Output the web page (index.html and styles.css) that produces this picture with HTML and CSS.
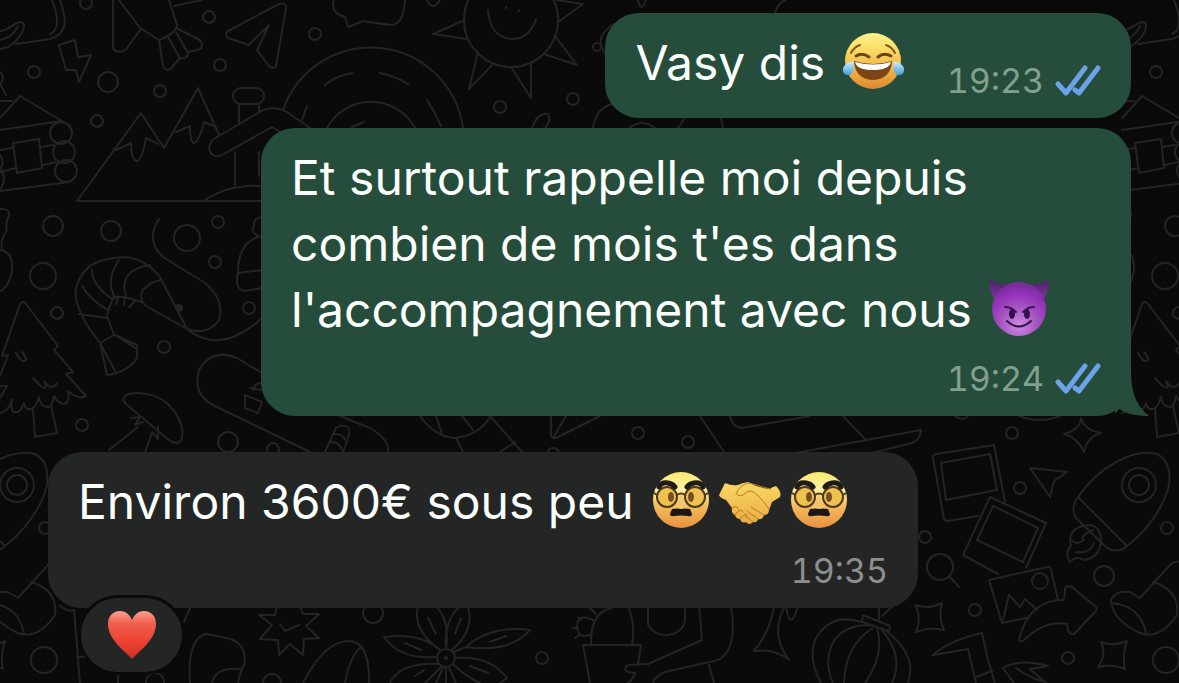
FILE: index.html
```html
<!DOCTYPE html>
<html lang="fr">
<head>
<meta charset="utf-8">
<meta name="viewport" content="width=device-width, initial-scale=1">
<title>Discussion</title>
<link rel="stylesheet" href="styles.css">
</head>
<body>
<svg class="defs" width="0" height="0" aria-hidden="true">
  <defs>
    <linearGradient id="gold" x1="0" y1="0" x2="0" y2="1">
      <stop offset="0" stop-color="#fff08a"/><stop offset=".25" stop-color="#fbe16a"/><stop offset=".6" stop-color="#f3b94b"/><stop offset="1" stop-color="#dd8a2e"/>
    </linearGradient>
    <linearGradient id="peach" x1="0" y1="0" x2="0" y2="1">
      <stop offset="0" stop-color="#fbe670"/><stop offset=".3" stop-color="#fdf3a0"/><stop offset=".6" stop-color="#f4bd5c"/><stop offset="1" stop-color="#e9903f"/>
    </linearGradient>
    <radialGradient id="violet" cx=".5" cy=".8" r=".75">
      <stop offset="0" stop-color="#cf8ae0"/><stop offset=".45" stop-color="#a555c0"/><stop offset=".8" stop-color="#9330b8"/><stop offset="1" stop-color="#75309a"/>
    </radialGradient>
    <linearGradient id="horn" x1="0" y1="0" x2="0" y2="1">
      <stop offset="0" stop-color="#4a2266"/><stop offset="1" stop-color="#8336a6"/>
    </linearGradient>
    <linearGradient id="tear" x1="0" y1="0" x2="0" y2="1">
      <stop offset="0" stop-color="#d3f1fb"/><stop offset="1" stop-color="#3f9fda"/>
    </linearGradient>
    <linearGradient id="hand" x1="0" y1="0" x2="0" y2="1">
      <stop offset="0" stop-color="#fbd866"/><stop offset="1" stop-color="#e9ac42"/>
    </linearGradient>
    <linearGradient id="red" x1="0" y1="0" x2="0" y2="1">
      <stop offset="0" stop-color="#f9a191"/><stop offset=".25" stop-color="#f0604f"/><stop offset=".65" stop-color="#ee4132"/><stop offset="1" stop-color="#cf3022"/>
    </linearGradient>
    <symbol id="ticks" viewBox="0 0 46 32">
      <path d="M3 19 11 28 30 3M20 25 24 28 43 3" fill="none" stroke="#6ba3e8" stroke-width="5" stroke-linecap="round" stroke-linejoin="round"/>
    </symbol>
    <symbol id="disguise" viewBox="0 0 65 65">
      <circle cx="32" cy="32" r="28" fill="url(#peach)"/>
      <circle cx="18" cy="29" r="10" fill="#efc250" stroke="#4c3920" stroke-width="2"/>
      <circle cx="46" cy="29" r="10" fill="#efc250" stroke="#4c3920" stroke-width="2"/>
      <path d="M10 19Q12 14 19 15Q24 16 26 19M54 19Q52 14 45 15Q40 16 38 19" fill="none" stroke="#211b18" stroke-width="5" stroke-linecap="round" stroke-linejoin="round"/>
      <path d="M32 27Q27 36 26 41H38Q37 36 32 27Z" fill="#f2c66c"/>
      <path d="M28 27Q32 24 36 27M8 27 5 25M56 27 59 25" fill="none" stroke="#4c3920" stroke-width="2"/>
      <ellipse cx="22" cy="29" rx="3" ry="5" fill="#765022"/>
      <ellipse cx="42" cy="29" rx="3" ry="5" fill="#765022"/>
      <path d="M23 41Q29 40 32 41Q36 40 41 41L43 46Q43 49 39 48Q32 47 25 48Q21 49 21 46Z" fill="#1c1715"/>
    </symbol>
    <g id="doodles">
      <g>
        <circle cx="86" cy="3" r="6"/><circle cx="34" cy="72" r="6"/><circle cx="108" cy="82" r="10"/><circle cx="160" cy="91" r="6"/><circle cx="97" cy="121" r="6"/><circle cx="209" cy="17" r="6"/><circle cx="220" cy="65" r="6"/><circle cx="315" cy="34" r="6"/><circle cx="500" cy="107" r="6"/><circle cx="573" cy="99" r="6"/><circle cx="597" cy="47" r="4"/>
        <circle cx="53" cy="226" r="10"/><circle cx="111" cy="231" r="10"/><circle cx="43" cy="276" r="13"/><circle cx="187" cy="238" r="13"/><circle cx="218" cy="222" r="6"/><circle cx="215" cy="262" r="6"/><circle cx="57" cy="313" r="6"/><circle cx="249" cy="308" r="6"/><circle cx="164" cy="347" r="6"/><circle cx="82" cy="425" r="6"/><circle cx="228" cy="442" r="10"/><circle cx="273" cy="449" r="6"/>
        <circle cx="638" cy="433" r="6"/><circle cx="688" cy="442" r="6"/><circle cx="553" cy="454" r="6"/><circle cx="1012" cy="433" r="6"/><circle cx="1020" cy="488" r="6"/><circle cx="925" cy="537" r="6"/><circle cx="975" cy="610" r="6"/><circle cx="1167" cy="528" r="6"/><circle cx="1104" cy="576" r="10"/><circle cx="1068" cy="658" r="6"/><circle cx="1166" cy="660" r="13"/><circle cx="940" cy="567" r="13"/><circle cx="373" cy="613" r="10"/><circle cx="272" cy="683" r="9"/><circle cx="542" cy="658" r="6"/><circle cx="155" cy="682" r="9"/>
      </g>
      <path d="M52 0C58 15 60 30 50 34M60 0C67 20 68 34 50 39L16 44M0 31C10 30 14 22 21 22C28 24 22 38 8 47L0 49M18 26C13 36 8 38 0 40"/>
      <path d="M59 45 75 40 78 57 91 55 79 82 76 70 66 70Z"/>
      <path d="M113 0V47C114 53 124 53 127 48L140 30M119 0 140 28 159 40C170 36 177 30 177 25L169 0M159 40 163 66C165 72 171 70 173 66L180 58M168 37 180 58Q187 60 188 53L176 32M178 29 200 40Q205 48 197 50L188 52M174 6 201 0"/>
      <path d="M228 31 279 4Q286 2 286 8L276 66Q273 70 269 66L257 50 269 25 249 45 228 38Q224 34 228 31"/>
      <path d="M334 0C330 10 338 15 345 17L348 27 363 21Q380 24 393 25Q404 22 405 0M427 0Q433 12 440 0M638 0Q641 14 646 0M775 13Q778 2 786 0"/>
      <path d="M262 201H77L141 113 164 148 198 88 219 135M116 150 131 143Q131 160 137 161Q142 160 146 138L158 144M176 132 190 126Q190 143 194 143Q200 140 204 122L216 127"/>
      <rect x="233" y="88" width="31" height="16" rx="8"/>
      <path d="M239 104V124M259 104V111M310 128 287 112Q272 104 258 113L212 140Q206 150 213 155Q218 158 224 154L272 127 282 133M235 152V185M205 200Q230 184 261 186M259 152V176"/>
      <path d="M283 110A93 93 0 0 1 463 128M327 128A50 50 0 0 1 415 128M325 85Q335 76 352 73M380 73Q395 76 408 84M427 100Q435 112 441 126M302 120 307 106M352 127 364 122"/>
      <path d="M0 118 20 96 62 121 0 130M13 143 39 139 42 168 17 173ZM0 150 12 148M0 172 16 168M40 147 53 145M43 165 56 162M0 191 70 182M0 155Q5 162 0 169Q8 178 0 190M0 72Q6 78 0 84L6 95M0 101H12"/>
      <circle cx="61" cy="133" r="11"/><circle cx="64" cy="152" r="11"/><circle cx="66" cy="171" r="11"/>
      <circle cx="511" cy="20" r="47"/>
      <path d="M488 10Q490 38 513 39Q530 38 536 19M506 7V8M519 10V11M465 20 433 34 467 39M478 52 469 89 494 63M511 67 531 98 531 63M544 54 577 65 555 36M557 0 583 4 558 22"/>
      <path d="M532 128Q538 112 548 114Q552 120 545 128M593 128Q596 108 612 104M614 24Q592 38 606 54M629 128Q642 118 655 128M678 128 685 118M721 118 723 128"/>
      <path d="M0 209Q10 208 9 216Q5 222 7 230Q0 240 2 248M0 250Q14 252 12 272Q8 288 0 291"/>
      <path d="M0 376 8 355 2 356 20 304Q23 300 26 304L58 346 54 350 73 372 66 374 86 396Q78 400 68 391Q70 400 65 404Q58 404 54 396Q52 408 47 407Q40 406 39 397Q36 408 31 409Q25 410 24 403Q20 414 14 412Q10 410 12 400Q8 412 0 413M33 409 35 437 57 433 51 406M16 353Q22 364 26 360Q26 356 22 352M33 378Q45 392 46 386L44 381Q52 392 57 383M0 386H7L0 398"/>
      <path d="M100 343Q70 305 77 285C84 262 104 258 125 257C145 258 160 275 162 281L187 329 146 306Q138 298 143 290Q150 282 161 280M100 343 114 335 107 316Q110 304 114 297Q125 296 141 302M79 314 107 318M82 286Q90 300 108 310M92 270Q92 285 112 299M119 260Q105 280 115 298M150 265Q118 270 126 296M100 343 107 375Q128 372 137 358V345L115 335M100 343 115 371M115 335 137 349M116 304 118 298M124 305 125 297M129 307 135 301M159 219Q145 240 163 257L205 283Q225 300 219 320Q208 336 187 329Q220 356 262 318"/>
      <circle class="dot" cx="179" cy="308" r="3"/>
      <path d="M124 397C130 390 155 392 168 404Q185 422 182 438Q180 446 170 441L126 404Q122 400 124 397M131 418 140 417 135 425 143 422M109 450 138 427M145 452 152 432 158 439V426"/>
      <path d="M262 373 237 358Q212 348 199 370Q192 395 215 406L310 452M250 388 262 390M245 395 262 402 258 413 245 408ZM253 390Q256 380 264 385M262 236Q238 240 238 273L262 270M238 273Q234 290 245 291L262 288M262 217Q253 218 254 226Q250 232 258 236"/>
      <path d="M340 416 370 428Q390 440 388 452M325 452 336 428Q340 424 348 427Q352 430 343 452M335 434Q343 434 345 440M330 442Q340 442 342 450M420 416Q435 437 455 438Q478 436 491 416M436 416 442 434M462 416 473 430M456 438 463 452M490 416 522 452M500 452 515 442M600 416 558 437Q551 440 551 434V416M566 416 553 438M700 416 724 452M730 416Q733 428 742 428L810 416M843 416 865 439M790 454 921 430Q920 440 912 443L868 454"/>
      <path d="M950 577 959 587M1081 418Q1084 430 1101 433Q1087 437 1084 452Q1078 438 1064 434Q1080 430 1081 418M915 605Q928 610 942 603Q938 617 944 630Q930 626 916 632Q922 618 915 605M1101 642Q1114 647 1127 641Q1122 655 1125 669Q1112 663 1098 667Q1107 655 1101 642M1019 416Q1040 424 1060 416M955 416Q962 422 968 416"/>
      <path d="M1005 502 994 445 936 454Q932 455 933 458L944 519Q945 521 948 521L978 516M941 463 990 454 997 490 946 500ZM1026 568 1046 523 990 497 963 555 998 574M993 506 1038 528 1023 562 977 540Z"/>
      <path d="M1058 600 1051 570Q1050 566 1047 567L989 580 1002 623 1026 618M1003 620 1009 595 1020 607 1025 599 1037 610"/><circle cx="1040" cy="581" r="8"/>
      <path d="M1019 640C1025 612 1042 600 1063 600Q1065 598 1065 588Q1067 585 1072 587L1096 607Q1098 610 1094 613L1074 634Q1068 636 1067 624Q1045 620 1024 640Q1020 643 1019 640M1030 468 1067 472 1054 481 1050 497Z"/>
      <circle cx="1139" cy="485" r="17"/><circle cx="1139" cy="485" r="10"/>
      <path d="M1078 497C1100 465 1135 448 1157 454Q1172 462 1169 485Q1160 520 1127 546L1078 497Q1070 508 1076 518L1107 548Q1118 554 1127 546M1088 525Q1066 528 1071 546Q1064 552 1070 562Q1076 555 1084 560Q1100 558 1101 540Q1100 525 1088 525M1093 530Q1079 536 1084 540Q1076 546 1072 540M1076 552Q1090 554 1094 543"/>
      <path d="M1111 600Q1115 590 1130 592L1140 598 1170 565Q1175 560 1184 562M1153 582Q1180 590 1177 615Q1160 640 1140 633Q1112 620 1111 600M1111 603Q1140 605 1146 633M60 606Q68 612 74 610L80 683M77 657H85M118 683V674M184 622 190 608"/>
      <path d="M277 606 275 615 259 615 272 625 260 639 278 640 279 655 290 644 303 655 304 639 319 638 306 626 319 614 303 614 300 606M280 624 285 631 299 625M190 683Q187 640 205 634Q215 635 230 639Q248 645 244 665Q240 672 238 683M212 683Q215 667 240 669M303 683Q325 640 350 641Q370 643 369 683M345 683Q350 655 362 646"/>
      <circle cx="446" cy="658" r="9"/><circle cx="446" cy="658" r="1"/>
      <path d="M440 650Q412 630 418 606M446 648Q450 620 436 606M446 648Q444 620 460 606M452 650Q475 630 468 606M437 657Q400 660 384 637Q420 632 440 650M466 647Q490 625 530 630Q510 653 466 647L454 652M455 658Q490 655 507 678L500 683M453 664Q465 676 480 683M439 664Q400 662 390 683M441 667 425 683M446 667V683M443 668 436 683M449 668 456 683M428 618 436 634M461 618 455 634M405 643 421 650M490 642 506 636M470 666 488 673M415 676 424 670"/>
      <path d="M591 645Q590 612 612 608M628 606Q636 625 632 645M638 664 641 645H583L590 683M588 606 596 614M593 620Q578 612 577 627Q578 640 592 634M573 628H578M578 617 581 620M575 638 579 635M648 606V624Q652 635 668 635Q684 632 685 620V606M699 606 702 640 648 664 628 665Q620 672 635 673Q634 678 628 683M731 606Q738 650 718 660L665 672Q655 676 653 683M709 665 714 683M774 606Q770 632 754 651Q775 648 789 660Q770 635 784 608M786 606Q790 634 798 606"/>
      <path d="M862 622Q830 612 815 640Q808 660 821 683M870 625Q830 625 828 662Q829 675 833 683M873 628Q845 645 844 683M877 628Q885 655 865 683M880 628Q905 655 892 683M885 630Q918 655 908 683M863 615 890 626 889 631 862 622ZM879 620V608M882 616 893 606"/>
      <path d="M976 683 968 649 933 655Q950 640 982 633L988 660 995 683M976 677 992 671M1014 683 1003 668Q1020 658 1048 666L1030 669 1046 683M1016 668Q1030 678 1042 681"/>
    </g>
  </defs>
</svg>

<main class="chat">
  <svg class="wallpaper" aria-hidden="true">
    <use href="#doodles" x="-1122"/>
    <use href="#doodles"/>
    <use href="#doodles" x="1122"/>
  </svg>

  <article class="bubble sent compact">
    <p class="text">Vasy dis <svg class="emoji" viewBox="0 0 65 65" role="img" aria-label="😂">
      <circle cx="32" cy="32" r="28" fill="url(#gold)"/>
      <path d="M10 24Q13 18 19 16M54 24Q51 18 45 16" fill="none" stroke="#85591c" stroke-width="2" stroke-linecap="round"/>
      <path d="M15 27Q21 23 28 28M37 28Q43 23 50 27" fill="none" stroke="#6b4317" stroke-width="3" stroke-linecap="round"/>
      <path d="M13 32Q32 38 51 32Q50 50 32 51Q14 50 13 32Z" fill="#7b4515"/>
      <path d="M14 33Q32 38 50 33Q48 41 32 41Q16 41 14 33Z" fill="#fff"/>
      <path d="M12 32Q15 41 9 46Q1 47 2 39Q4 34 12 32ZM53 32Q50 41 56 46Q64 47 63 39Q61 34 53 32Z" fill="url(#tear)"/>
    </svg></p>
    <footer class="meta"><time>19:23</time><svg class="ticks" role="img" aria-label="Lu"><use href="#ticks"/></svg></footer>
  </article>

  <article class="bubble sent wide">
    <p class="text">Et surtout rappelle moi depuis combien de mois t'es dans l'accompagnement avec nous <svg class="emoji" viewBox="0 0 65 65" role="img" aria-label="😈">
      <path d="M2 4Q10 8 21 8L8 24Q2 15 2 4ZM62 4Q54 8 43 8L56 24Q62 15 62 4Z" fill="url(#horn)"/>
      <circle cx="32" cy="33" r="27" fill="url(#violet)"/>
      <path d="M18 31Q24 31 29 36M47 31Q41 31 36 36" fill="none" stroke="#3e1457" stroke-width="2" stroke-linecap="round"/>
      <ellipse cx="25" cy="38" rx="3" ry="5" fill="#32104a"/><ellipse cx="40" cy="38" rx="3" ry="5" fill="#32104a"/>
      <path d="M20 45Q32 56 44 45" fill="none" stroke="#32104a" stroke-width="2" stroke-linecap="round"/>
    </svg></p>
    <footer class="meta"><time>19:24</time><svg class="ticks" role="img" aria-label="Lu"><use href="#ticks"/></svg></footer>
    <svg class="tail" viewBox="0 0 34 46" aria-hidden="true"><path d="M0 0H16C16 20 20 35 34 46C22 46 12 44 4 39L0 44Z"/></svg>
  </article>

  <article class="bubble received wide">
    <p class="text">Environ 3600€ sous peu <svg class="emoji" role="img" aria-label="🥸"><use href="#disguise"/></svg><svg class="emoji" viewBox="0 0 65 65" role="img" aria-label="🤝">
      <path d="M7 15 1 27Q2 30 8 32L14 40Q13 45 17 47Q18 51 22 51Q24 56 28 54Q31 58 35 54Q39 55 40 51Q45 52 46 47Q51 47 51 42L54 34 62 29Q64 24 58 18Q54 19 52 21Q44 20 38 18L30 14Q24 15 20 17Q14 18 7 15Z" fill="url(#hand)"/>
      <path d="M19 26Q20 29 25 27Q30 22 34 23Q42 28 51 41M18 26Q22 16 31 15Q38 17 52 21M33 39 46 47M29 43 40 51M27 48 35 54M14 40Q19 36 20 41M17 47Q23 39 25 44M22 51Q28 43 29 48" fill="none" stroke="#b87b25" stroke-width="1" stroke-linecap="round"/>
    </svg><svg class="emoji" role="img" aria-label="🥸"><use href="#disguise"/></svg></p>
    <footer class="meta"><time>19:35</time></footer>
    <button class="reaction" type="button" aria-label="Réaction ❤️">
      <svg class="heart" viewBox="0 0 50 50" aria-hidden="true"><path d="M25 49C19 42 1 30 1 14C1 6 6 1 13 1C19 1 23 5 25 10C27 5 31 1 37 1C44 1 49 6 49 14C49 30 31 42 25 49Z" fill="url(#red)"/></svg>
    </button>
  </article>
</main>
</body>
</html>
```
FILE: styles.css
```css
* {
  box-sizing: border-box;
}

body {
  margin: 0;
  background: #0a0a0a;
  font-family: Inter, "Liberation Sans", sans-serif;
}

.defs {
  position: absolute;
}

.chat {
  position: relative;
  display: flex;
  flex-direction: column;
  gap: 10px;
  min-height: 100vh;
  padding: 13px 48px 0;
  overflow: hidden;
}

.wallpaper {
  position: absolute;
  inset: 0;
  width: 100%;
  height: 100%;
  fill: none;
  stroke: #242424;
  stroke-width: 2;
  stroke-linecap: round;
  stroke-linejoin: round;
}

.dot {
  fill: #242424;
}

.bubble {
  position: relative;
  display: flex;
  flex-direction: column;
  gap: 21px;
  max-width: 100%;
  padding: 17px 30px 22px;
  border-radius: 34px;
  color: #fbfffb;
}

.sent {
  align-self: flex-end;
  background: #264c3b;
}

.received {
  align-self: flex-start;
  margin-top: 26px;
  margin-bottom: 75px;
  background: #242625;
}

.wide {
  width: 870px;
}

.compact {
  flex-direction: row;
  align-items: flex-end;
  gap: 39px;
}

.text {
  margin: 0;
  font-size: 48px;
  line-height: 66px;
}

.emoji {
  width: 65px;
  height: 65px;
  margin: -15px 2px -5px;
  vertical-align: middle;
}

.meta {
  display: flex;
  justify-content: flex-end;
  align-items: center;
  gap: 11px;
  font-size: 34px;
  font-variant-numeric: tabular-nums;
  line-height: 30px;
  color: #83a08f;
}

.received .meta {
  color: #8d8f8e;
}

.ticks {
  width: 46px;
  height: 32px;
  margin: -1px 0;
}

.tail {
  position: absolute;
  right: -18px;
  bottom: 0;
  width: 34px;
  height: 46px;
  fill: #264c3b;
}

.reaction {
  position: absolute;
  left: 30px;
  bottom: -67px;
  display: flex;
  justify-content: center;
  align-items: center;
  width: 107px;
  height: 80px;
  padding: 0;
  border: 3px solid #0a0a0a;
  border-radius: 40px;
  background: #242625;
}

.heart {
  width: 50px;
  height: 50px;
}
```
